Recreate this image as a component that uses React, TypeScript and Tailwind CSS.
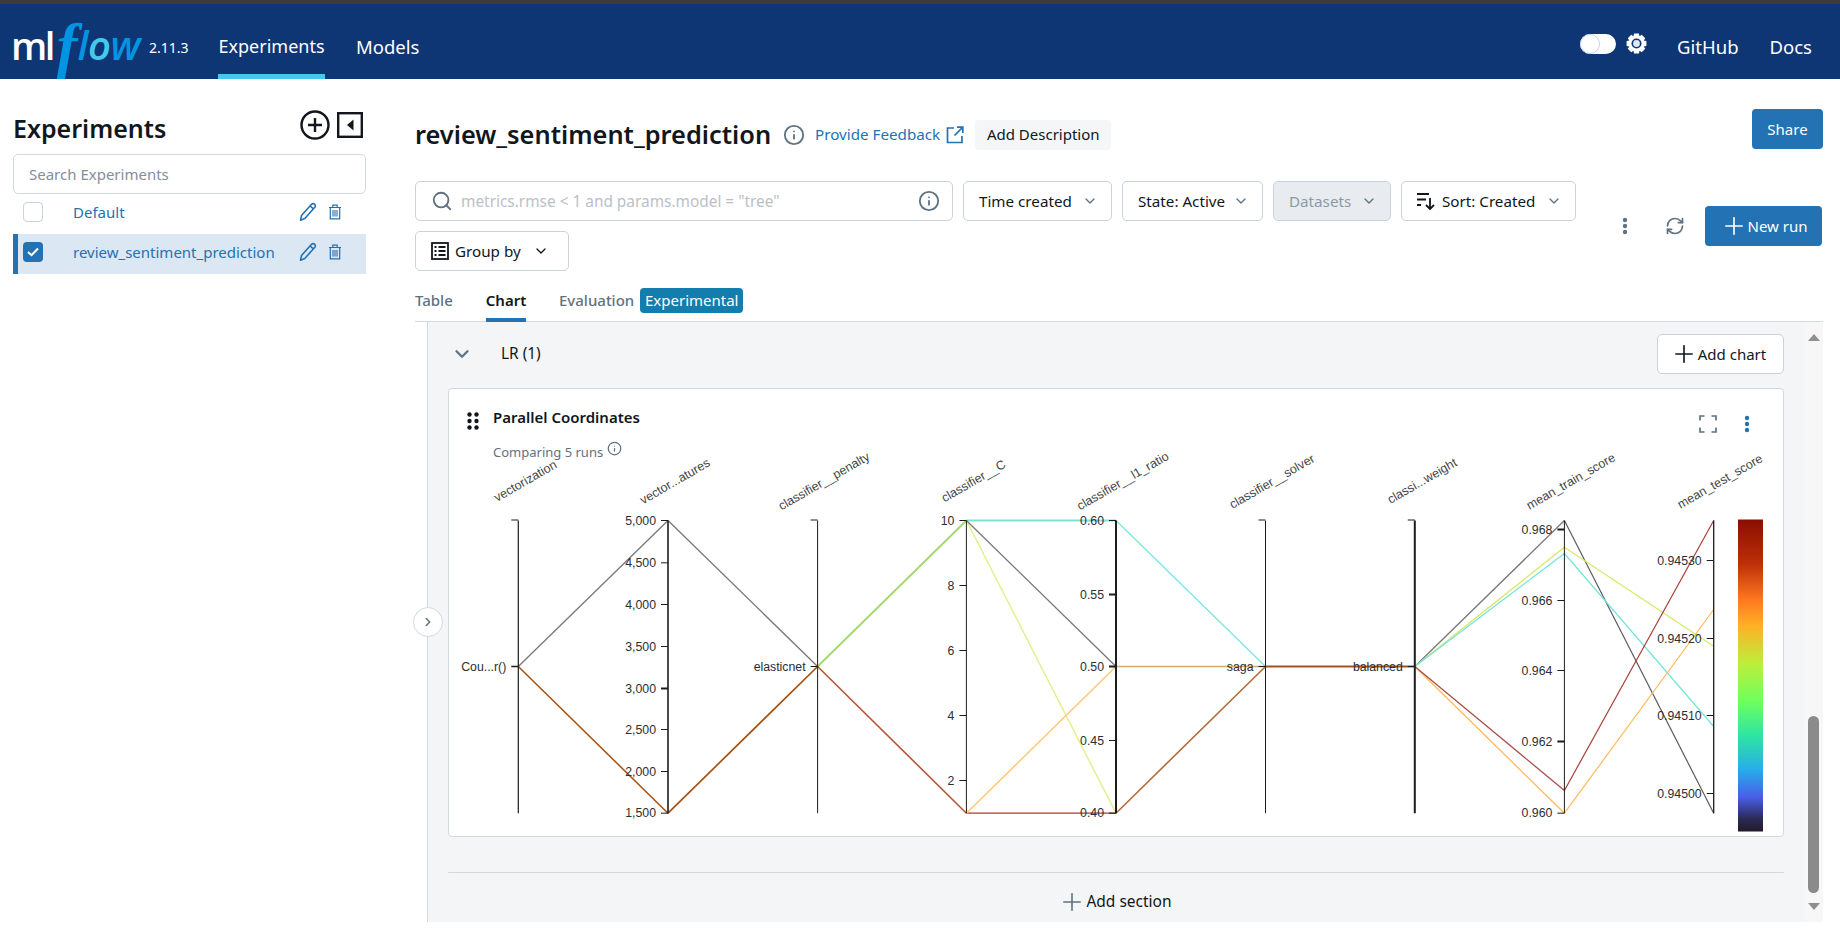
import React from "react";
import { ChevronDown, ChevronRight, Plus, RefreshCw, Search, Info } from "lucide-react";

const X = [518.3, 668, 817.6, 966.4, 1116, 1265.5, 1414.8, 1564.4, 1713.7];
const T = 521;
const B = 813.7;
const M = 667;

const segments: [number, number, number, number, string, number][] = [
  [0, M, 1, T, "#7b7676", 1.3],
  [1, T, 2, M, "#7b7676", 1.3],
  [0, M, 1, B, "#a4510f", 1.5],
  [1, B, 2, M, "#a4510f", 1.7],
  [2, M, 3, T, "#a3d86e", 1.8],
  [2, M, 3, B, "#b4563a", 1.6],
  [3, T, 4, T, "#7fe0d8", 1.8],
  [3, B, 4, B, "#c0736a", 1.8],
  [3, T, 4, B, "#e3f08e", 1.5],
  [3, T, 4, M, "#7b7676", 1.3],
  [3, B, 4, M, "#ffc878", 1.5],
  [4, T, 5, M, "#7de8e0", 1.4],
  [4, M, 5, M, "#d9a868", 1.5],
  [4, B, 5, M, "#b36b3c", 1.6],
  [5, M, 6, M, "#a8521a", 2],
  [6, M, 7, T, "#7b7676", 1.3],
  [6, M, 7, 547.7, "#d8e86a", 1.3],
  [6, M, 7, 554, "#74e3dc", 1.3],
  [6, M, 7, B, "#ffb95c", 1.3],
  [6, M, 7, 791, "#a8504a", 1.3],
  [7, T, 8, B, "#5f5a5a", 1.2],
  [7, 547.7, 8, 646.7, "#d8e86a", 1.2],
  [7, 554, 8, 727, "#74e3dc", 1.2],
  [7, B, 8, 610, "#ffb95c", 1.2],
  [7, 791, 8, T, "#a8403a", 1.2],
];

const axes: { w: number; ticks: [string, number, number][]; hook?: boolean }[] = [
  { w: 1.2, hook: true, ticks: [["Cou...r()", M, 1.5]] },
  { w: 1.6, ticks: [["5,000", T, 1], ["4,500", 563.3, 1], ["4,000", 605, 1], ["3,500", 647, 1], ["3,000", 689, 2], ["2,500", 730, 1], ["2,000", 772, 1], ["1,500", B, 1]] },
  { w: 1, hook: true, ticks: [["elasticnet", M, 1]] },
  { w: 1, ticks: [["10", T, 1], ["8", 586, 1], ["6", 651, 1], ["4", 716, 1], ["2", 781, 1]] },
  { w: 2, ticks: [["0.60", T, 1], ["0.55", 595, 2], ["0.50", M, 2], ["0.45", 741, 1], ["0.40", B, 1]] },
  { w: 1, hook: true, ticks: [["saga", M, 1]] },
  { w: 2, hook: true, ticks: [["balanced", M, 1]] },
  { w: 1, ticks: [["0.968", 530, 2], ["0.966", 601, 1], ["0.964", 671, 1], ["0.962", 742, 2], ["0.960", B, 1]] },
  { w: 1.3, ticks: [["0.94530", 561, 1], ["0.94520", 639, 1], ["0.94510", 716, 1], ["0.94500", 794, 1]] },
];

const labels: [string, number, number][] = [
  ["vectorization", 497, 502.6],
  ["vector...atures", 643, 505],
  ["classifier__penalty", 781.5, 511],
  ["classifier__C", 944.5, 503],
  ["classifier__l1_ratio", 1080, 511],
  ["classifier__solver", 1232.5, 509.5],
  ["classi...weight", 1390.5, 504.5],
  ["mean_train_score", 1529.5, 510.5],
  ["mean_test_score", 1680.5, 509.5],
];

function Chart() {
  return (
    <svg width={1335} height={376} viewBox="449 460.5 1335 376" className="block overflow-visible">
      <defs>
        <linearGradient id="cb" x1="0" y1="0" x2="0" y2="1">
          <stop offset="0" stopColor="#8a0e00" />
          <stop offset="0.14" stopColor="#bb2f08" />
          <stop offset="0.26" stopColor="#ff7a20" />
          <stop offset="0.34" stopColor="#ffb025" />
          <stop offset="0.46" stopColor="#bdee3a" />
          <stop offset="0.58" stopColor="#70ff5c" />
          <stop offset="0.69" stopColor="#2ee6a0" />
          <stop offset="0.8" stopColor="#28aee8" />
          <stop offset="0.89" stopColor="#4a5ee8" />
          <stop offset="0.96" stopColor="#2a2a55" />
          <stop offset="1" stopColor="#231a2a" />
        </linearGradient>
      </defs>
      {segments.map(([a, y1, b, y2, c, w], i) => (
        <line key={i} x1={X[a]} y1={y1} x2={X[b]} y2={y2} stroke={c} strokeWidth={w} />
      ))}
      {axes.map((ax, i) => (
        <g key={i} fontFamily='"Liberation Sans", Arial, sans-serif' fontSize={12.3} fill="#2a2f33">
          <line x1={X[i]} y1={T} x2={X[i]} y2={B} stroke="#1c1c1c" strokeWidth={ax.w} />
          {ax.hook && <line x1={X[i] - 7} y1={T - 0.5} x2={X[i]} y2={T - 0.5} stroke="#1c1c1c" strokeWidth={1} />}
          {ax.ticks.map(([t, y, w]) => (
            <g key={t}>
              <line x1={X[i] - 7} y1={y} x2={X[i]} y2={y} stroke="#1c1c1c" strokeWidth={w} />
              <text x={X[i] - 12} y={y + 4} textAnchor="end">
                {t}
              </text>
            </g>
          ))}
        </g>
      ))}
      {labels.map(([t, x, y]) => (
        <text
          key={t}
          x={x}
          y={y}
          fontFamily='"Liberation Sans", Arial, sans-serif'
          fontSize={12.5}
          fill="#444"
          transform={`rotate(-30 ${x} ${y})`}
        >
          {t}
        </text>
      ))}
      <rect x={1738} y={520} width={25} height={312} fill="url(#cb)" />
    </svg>
  );
}

function Pencil() {
  return (
    <svg width="18" height="20" viewBox="0 0 18 20" fill="none" stroke="#2272b4" strokeWidth="1.6">
      <path d="M1.5 18.2 L2.5 13.5 L12.5 2.3 Q14 1 15.6 2.2 Q17 3.6 15.8 5.2 L5.8 16.5 Z" strokeLinejoin="round" />
      <path d="M11.2 4 L14.4 6.8" />
    </svg>
  );
}

function Trash() {
  return (
    <svg width="14" height="16" viewBox="0 0 14 16" fill="none" stroke="#2272b4" strokeWidth="1.2">
      <path d="M1 3.5 H13 M4.8 3.5 V1.2 H9.2 V3.5" />
      <path d="M2.3 3.5 V14.8 H11.7 V3.5" />
      <path d="M5 6 V12.5 M7 6 V12.5 M9 6 V12.5" strokeWidth="1.1" />
    </svg>
  );
}

function Gear() {
  const teeth = [0, 45, 90, 135, 180, 225, 270, 315];
  return (
    <svg width="21" height="21" viewBox="0 0 21 21">
      {teeth.map((a) => (
        <path key={a} d="M8 0.6 H13 L13.8 5 H7.2 Z" fill="white" transform={`rotate(${a} 10.5 10.5)`} />
      ))}
      <circle cx="10.5" cy="10.5" r="7.6" fill="white" />
      <circle cx="10.5" cy="10.5" r="5" fill="#0e3574" />
      <circle cx="10.5" cy="10.5" r="3.4" fill="#dfe7f2" />
    </svg>
  );
}

function Kebab({ color, h = 18 }: { color: string; h?: number }) {
  return (
    <svg width="6" height={h} viewBox={`0 0 6 ${h}`} fill={color}>
      <circle cx="3" cy="3" r="2.2" />
      <circle cx="3" cy={h / 2} r="2.2" />
      <circle cx="3" cy={h - 3} r="2.2" />
    </svg>
  );
}

function ChevronSmall({ color = "#1f272d" }: { color?: string }) {
  return <ChevronDown size={16} color={color} strokeWidth={2} />;
}

function Btn({ children, className = "" }: { children: React.ReactNode; className?: string }) {
  return (
    <div className={`flex h-10 shrink-0 items-center rounded-[5px] border border-[#c8d2dc] bg-white text-[15.2px] text-[#11171c] ${className}`}>
      {children}
    </div>
  );
}

export default function App() {
  return (
    <div className="h-[931px] w-[1840px] overflow-hidden bg-white font-['Noto_Sans',_sans-serif] text-[#11171c]">
      <div className="h-1 bg-[#3c3c3c]" />
      <header className="flex h-[75px] items-center bg-[#0e3574] text-white">
        <div className="ml-[11px] flex w-[207px] items-center">
          <div className="mt-[6px] flex h-[60px] w-[138px] items-center leading-none">
            <span className="font-['Open_Sans',_sans-serif] text-[38px] font-semibold tracking-[-2.5px] text-white">ml</span>
            <span className="ml-[4px] font-['Liberation_Serif',_serif] text-[62px] font-bold italic text-[#0194e2]">f</span>
            <span className="font-['Open_Sans',_sans-serif] text-[40px] font-semibold italic tracking-[-0.5px] text-[#0194e2]">
              l<span className="text-[#43c9ed]">o</span>w
            </span>
          </div>
          <span className="mt-[11px] text-[14px]">2.11.3</span>
        </div>
        <div className="relative flex h-full w-[107px] items-center justify-center pt-[10px] text-[18px]">
          Experiments
          <div className="absolute inset-x-0 bottom-0 h-[5px] bg-[#43c9ed]" />
        </div>
        <div className="ml-[31px] mt-[10px] text-[18.5px]">Models</div>
        <div className="ml-auto mt-[4px] flex items-center">
          <div className="relative h-5 w-[36px] rounded-full bg-white">
            <div className="absolute left-0 top-0 h-5 w-5 rounded-full border border-[#c8d2dc] bg-white" />
          </div>
          <div className="ml-[10px]">
            <Gear />
          </div>
          <span className="ml-[30px] mt-[6px] text-[18.5px]">GitHub</span>
          <span className="ml-[31px] mr-[28px] mt-[6px] text-[18.5px]">Docs</span>
        </div>
      </header>
      <div className="flex h-[852px]">
        <aside className="w-[415px] shrink-0 pl-[13px] pr-[49px]">
          <div className="flex h-[75px] items-start justify-between pr-[3px]">
            <span className="mt-[37px] text-[25px] font-semibold leading-[25px]">Experiments</span>
            <div className="mt-[31px] flex items-center gap-[7px]">
              <svg width="30" height="30" viewBox="0 0 30 30" fill="none" stroke="#11171c">
                <circle cx="15" cy="15" r="13.5" strokeWidth="2.4" />
                <path d="M15 8 V22 M8 15 H22" strokeWidth="2.4" />
              </svg>
              <svg width="26" height="26" viewBox="0 0 26 26">
                <rect x="1.2" y="1.2" width="23.6" height="23.6" fill="none" stroke="#11171c" strokeWidth="2.4" />
                <path d="M10 13 L16.5 7.5 V18.5 Z" fill="#11171c" />
              </svg>
            </div>
          </div>
          <div className="flex h-10 items-center rounded-[5px] border border-[#d1d9e1] pl-[15px] text-[15px] text-[#82909c]">Search Experiments</div>
          <div className="flex h-[40px] items-center pb-[4px] pl-[10px] text-[15px] text-[#2272b4]">
            <div className="h-5 w-5 rounded-[4px] border border-[#c8d2dc]" />
            <span className="ml-[30px]">Default</span>
            <div className="ml-auto flex items-center gap-[11px] pr-[24px]">
              <Pencil />
              <Trash />
            </div>
          </div>
          <div className="flex h-[40px] items-center border-l-[5px] border-[#2272b4] bg-[#dbe7f3] pb-[4px] pl-[5px] text-[15px] text-[#2272b4]">
            <div className="flex h-5 w-5 items-center justify-center rounded-[4px] bg-[#2272b4]">
              <svg width="12" height="10" viewBox="0 0 12 10" fill="none" stroke="white" strokeWidth="2">
                <path d="M1 5 L4.5 8.2 L11 1.5" />
              </svg>
            </div>
            <span className="ml-[30px]">review_sentiment_prediction</span>
            <div className="ml-auto flex items-center gap-[11px] pr-[24px]">
              <Pencil />
              <Trash />
            </div>
          </div>
        </aside>
        <main className="flex w-[1408px] shrink-0 flex-col">
          <div className="mt-[30px] flex h-10 items-center">
            <div className="mt-[11px] flex items-center">
              <span className="text-[25.4px] font-semibold leading-none">review_sentiment_prediction</span>
              <Info size={22} color="#5f7281" className="ml-[12px]" />
              <span className="ml-[10px] text-[15.2px] text-[#2272b4]">Provide Feedback</span>
              <svg width="18" height="18" viewBox="0 0 18 18" fill="none" stroke="#2272b4" strokeWidth="1.7" className="ml-[6px]">
                <path d="M8 2 H1.5 V16.5 H16 V10 M11 1.2 H16.8 V7 M16.8 1.2 L8.5 9.5" />
              </svg>
              <div className="ml-[11px] flex h-[30px] w-[136px] items-center justify-center rounded-[4px] bg-[#f5f6f8] text-[15px]">Add Description</div>
            </div>
            <div className="ml-auto flex h-10 w-[71px] items-center justify-center rounded-[4px] bg-[#2272b4] text-[15px] text-white">Share</div>
          </div>
          <div className="mt-[32px] flex items-center">
            <div className="flex w-[1161px] flex-wrap gap-[10px]">
              <Btn className="w-[538px] pl-[15px] pr-[12px]">
                <Search size={22} color="#5f7281" />
                <span className="ml-[8px] pt-[1px] text-[15.4px] text-[#b9c1c8]">metrics.rmse &lt; 1 and params.model = "tree"</span>
                <Info size={22} color="#5f7281" className="ml-auto" />
              </Btn>
              <Btn className="w-[149px] justify-between pl-[15px] pr-[13px]">
                Time created
                <ChevronSmall color="#5f7281" />
              </Btn>
              <Btn className="w-[141px] justify-between pl-[15px] pr-[13px]">
                State: Active
                <ChevronSmall color="#5f7281" />
              </Btn>
              <Btn className="w-[118px] justify-between !bg-[#e8ebef] pl-[15px] pr-[13px] !text-[#8a9aa8]">
                Datasets
                <ChevronSmall color="#5f7281" />
              </Btn>
              <Btn className="w-[175px] justify-between pl-[15px] pr-[13px]">
                <span className="flex items-center gap-[7px]">
                  <svg width="18" height="18" viewBox="0 0 18 18" fill="none" stroke="#11171c" strokeWidth="1.8">
                    <path d="M0 2 H12 M0 7.5 H9 M0 13 H4 M13 6 V17 M9 13 L13 17 L17 13" />
                  </svg>
                  Sort: Created
                </span>
                <ChevronSmall color="#5f7281" />
              </Btn>
              <Btn className="w-[154px] justify-between pl-[15px] pr-[19px]">
                <span className="flex items-center gap-[6px]">
                  <svg width="18" height="18" viewBox="0 0 18 18" fill="none" stroke="#11171c" strokeWidth="1.8">
                    <rect x="1" y="1" width="16" height="16" />
                    <path d="M3.5 5 H5.5 M7.5 5 H14.5 M3.5 9 H5.5 M7.5 9 H14.5 M3.5 13 H5.5 M7.5 13 H14.5" />
                  </svg>
                  Group by
                </span>
                <ChevronSmall color="#11171c" />
              </Btn>
            </div>
            <div className="ml-[46px]">
              <Kebab color="#5f7281" />
            </div>
            <RefreshCw size={20} color="#5f7281" className="ml-[37px]" />
            <div className="ml-[20px] flex h-10 w-[117px] items-center justify-center rounded-[4px] bg-[#2272b4] text-[15px] text-white">
              <Plus size={28} strokeWidth={1.4} />
              New run
            </div>
          </div>
          <div className="flex h-[51px] items-end border-b border-[#d1d9e1] text-[15px]">
            <div className="flex h-[40px] w-[71px] items-center pb-[1px] font-medium text-[#5f7281]">Table</div>
            <div className="relative flex h-[40px] w-[40px] items-center justify-center pb-[1px] font-semibold">
              Chart
              <div className="absolute inset-x-0 bottom-[-1px] h-1 bg-[#2272b4]" />
            </div>
            <div className="ml-[33px] flex h-[40px] items-center pb-[1px] font-medium text-[#5f7281]">Evaluation</div>
            <div className="mb-[8px] ml-[6px] flex h-[25px] w-[103px] items-center justify-center rounded-[4px] bg-[#137dae] text-white">Experimental</div>
          </div>
          <div className="flex h-[600px]">
            <div className="relative ml-[12px] flex w-[1377px] flex-col border-l border-[#d1d9e1] bg-[#f4f5f7] px-5">
              <div className="absolute left-[-15px] top-[285px] flex h-[30px] w-[30px] items-center justify-center rounded-full border border-[#d1d9e1] bg-white">
                <ChevronRight size={14} color="#5f7281" strokeWidth={2.5} />
              </div>
              <div className="flex h-[66px] items-center justify-between pb-[2px]">
                <div className="flex items-center">
                  <ChevronDown size={22} color="#5f7281" strokeWidth={2.5} className="ml-[3px]" />
                  <span className="ml-[28px] text-[15.4px]">LR (1)</span>
                </div>
                <div className="flex h-10 w-[127px] items-center justify-center rounded-[5px] border border-[#c8d2dc] bg-white pr-[5px] text-[15px]">
                  <Plus size={28} strokeWidth={1.4} />
                  Add chart
                </div>
              </div>
              <div className="h-[449px] rounded-[4px] border border-[#d1d9e1] bg-white">
                <div className="flex h-[71px]">
                  <div className="ml-[18px] mt-[23px]">
                    <svg width="12" height="18" viewBox="0 0 12 18" fill="#11171c">
                      <circle cx="2.5" cy="2.5" r="2.2" />
                      <circle cx="9.5" cy="2.5" r="2.2" />
                      <circle cx="2.5" cy="9" r="2.2" />
                      <circle cx="9.5" cy="9" r="2.2" />
                      <circle cx="2.5" cy="15.5" r="2.2" />
                      <circle cx="9.5" cy="15.5" r="2.2" />
                    </svg>
                  </div>
                  <div className="ml-[14px] mt-[16px]">
                    <div className="text-[15px] font-semibold leading-[24px]">Parallel Coordinates</div>
                    <div className="mt-[13px] flex items-center text-[13px] leading-[20px] text-[#5f7281]">
                      Comparing 5 runs
                      <Info size={15} className="ml-[4px] -translate-y-[4px]" />
                    </div>
                  </div>
                  <div className="ml-auto mr-[33px] mt-[26px] flex items-start">
                    <svg width="18" height="18" viewBox="0 0 18 18" fill="none" stroke="#5f7281" strokeWidth="1.7">
                      <path d="M1 5.5 V1 H5.5 M12.5 1 H17 V5.5 M1 12.5 V17 H5.5 M17 12.5 V17 H12.5" />
                    </svg>
                    <div className="ml-[27px]">
                      <Kebab color="#2272b4" />
                    </div>
                  </div>
                </div>
                <Chart />
              </div>
              <div className="mt-[35px] h-[1px] rounded-b-[4px] bg-[#d1d9e1]" />
              <div className="mt-[15px] flex items-center justify-center pr-[2px] text-[15.5px]">
                <Plus size={28} color="#5f7281" strokeWidth={1.4} />
                <span>Add section</span>
              </div>
            </div>
            <div className="flex w-[19px] flex-col items-center bg-[#f7f7f7]">
              <div className="mt-[12px] h-0 w-0 border-x-[6.5px] border-b-[7px] border-x-transparent border-b-[#8f8f8f]" />
              <div className="mt-[375px] h-[177px] w-[11px] rounded-full bg-[#8b8b8b]" />
              <div className="mt-[10px] h-0 w-0 border-x-[6.5px] border-t-[7px] border-x-transparent border-t-[#8f8f8f]" />
            </div>
          </div>
        </main>
      </div>
    </div>
  );
}
